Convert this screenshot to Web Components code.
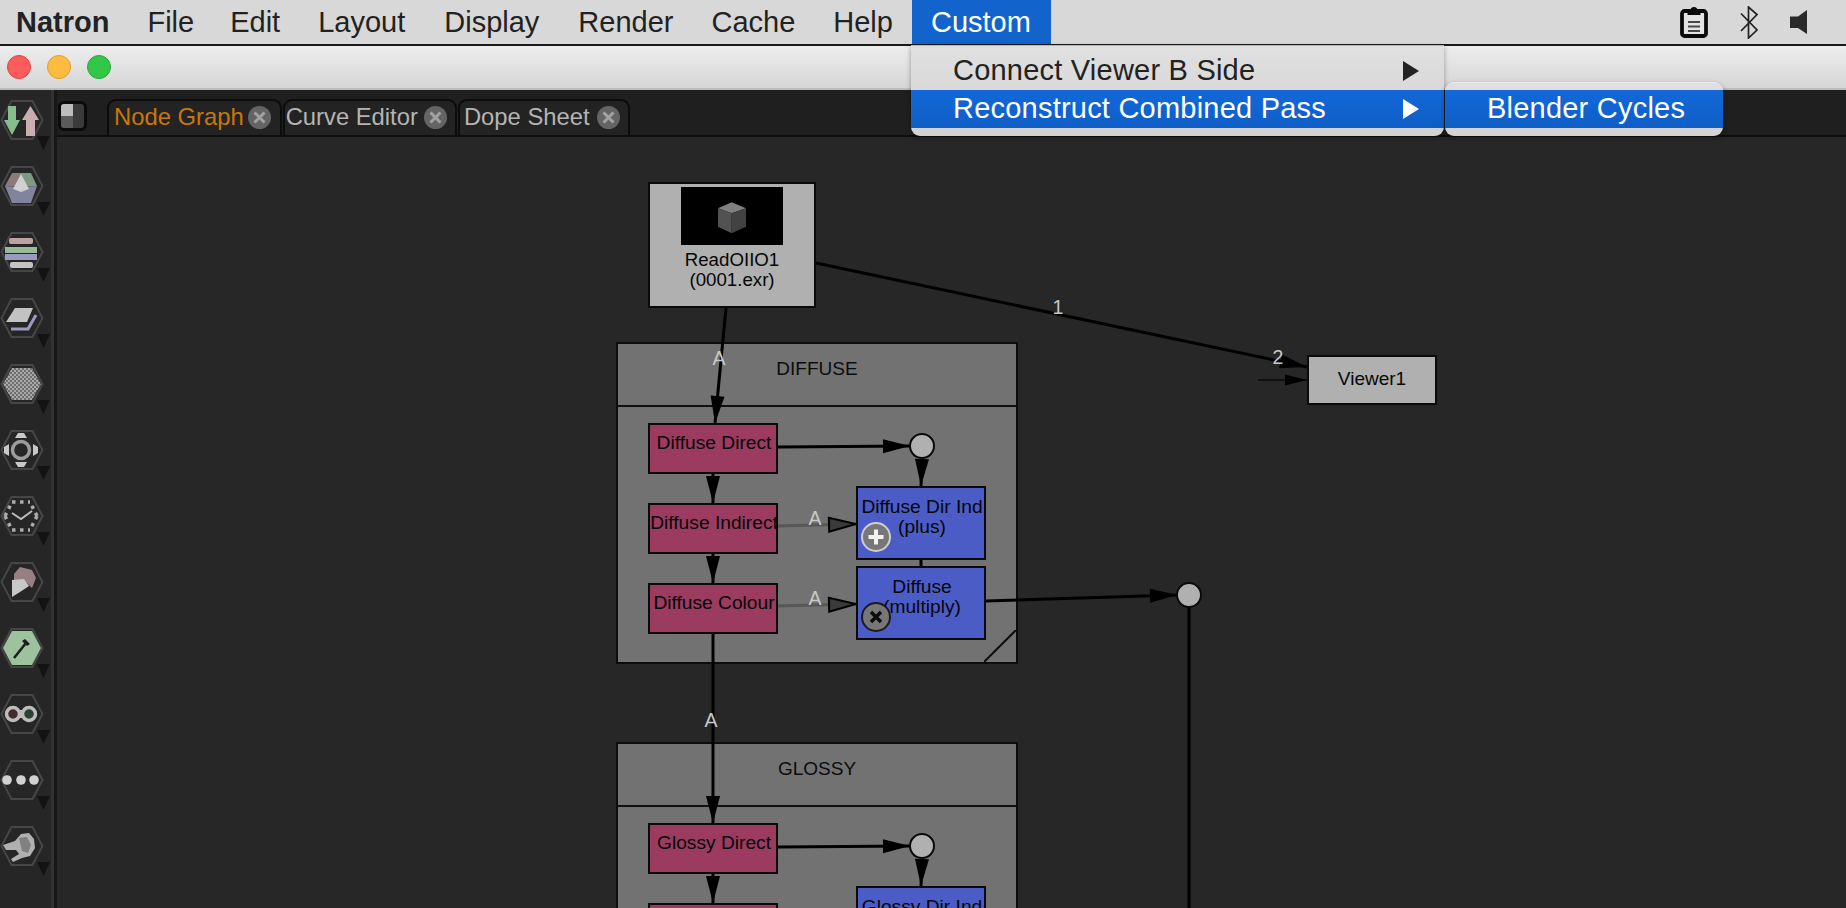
<!DOCTYPE html>
<html>
<head>
<meta charset="utf-8">
<title>Natron</title>
<style>
  html, body { margin: 0; height: 100%; overflow: hidden; background: #262626; }
  body { font-family: "Liberation Sans", Arial, sans-serif; }
</style>
</head>
<body>
<nt-app>
  <nt-menubar slot="menubar">
    <nt-menu-title bold>Natron</nt-menu-title>
    <nt-menu-title style="margin-right:-2px">File</nt-menu-title>
    <nt-menu-title>Edit</nt-menu-title>
    <nt-menu-title style="margin-right:1px">Layout</nt-menu-title>
    <nt-menu-title style="margin-right:1px">Display</nt-menu-title>
    <nt-menu-title>Render</nt-menu-title>
    <nt-menu-title>Cache</nt-menu-title>
    <nt-menu-title>Help</nt-menu-title>
    <nt-menu-title active>Custom</nt-menu-title>
  </nt-menubar>
  <nt-titlebar slot="titlebar"></nt-titlebar>
  <nt-toolbar slot="toolbar">
    <nt-tool icon="io"></nt-tool>
    <nt-tool icon="color"></nt-tool>
    <nt-tool icon="channel"></nt-tool>
    <nt-tool icon="filter"></nt-tool>
    <nt-tool icon="grid"></nt-tool>
    <nt-tool icon="transform"></nt-tool>
    <nt-tool icon="time"></nt-tool>
    <nt-tool icon="paint"></nt-tool>
    <nt-tool icon="keyer"></nt-tool>
    <nt-tool icon="merge"></nt-tool>
    <nt-tool icon="other"></nt-tool>
    <nt-tool icon="tool"></nt-tool>
  </nt-toolbar>
  <nt-tabbar slot="tabs">
    <nt-tab active style="padding-right:9px">Node Graph</nt-tab>
    <nt-tab style="padding:0 8px 2px 1px;gap:6px">Curve Editor</nt-tab>
    <nt-tab style="padding:0 8px 2px 4px;gap:7px">Dope Sheet</nt-tab>
  </nt-tabbar>
  <nt-graph slot="graph">
    <nt-backdrop slot="backdrops" x="616" y="342" w="402" h="322">DIFFUSE</nt-backdrop>
    <nt-backdrop slot="backdrops" x="616" y="742" w="402" h="322">GLOSSY</nt-backdrop>

    <nt-node kind="read" x="648" y="182" w="168" h="126"><nt-thumb></nt-thumb>ReadOIIO1<br>(0001.exr)</nt-node>
    <nt-node kind="viewer" x="1307" y="355" w="130" h="50">Viewer1</nt-node>

    <nt-node kind="pink" x="648" y="423" w="130" h="51">Diffuse Direct</nt-node>
    <nt-node kind="pink" x="648" y="503" w="130" h="51">Diffuse Indirect</nt-node>
    <nt-node kind="pink" x="648" y="583" w="130" h="51">Diffuse Colour</nt-node>
    <nt-node kind="blue" op="plus" x="856" y="486" w="130" h="74">Diffuse Dir Ind<br>(plus)</nt-node>
    <nt-node kind="blue" op="multiply" x="856" y="566" w="130" h="74">Diffuse<br>(multiply)</nt-node>
    <nt-dot x="922" y="446"></nt-dot>
    <nt-dot x="1189" y="595"></nt-dot>

    <nt-node kind="pink" x="648" y="823" w="130" h="51">Glossy Direct</nt-node>
    <nt-node kind="pink" x="648" y="903" w="130" h="51"></nt-node>
    <nt-node kind="blue" x="856" y="886" w="130" h="74">Glossy Dir Ind</nt-node>
    <nt-dot x="922" y="846"></nt-dot>
  </nt-graph>
  <nt-popup slot="popups" style="left:911px;top:45px;width:533px" top>
    <nt-popup-item arrow>Connect Viewer B Side</nt-popup-item>
    <nt-popup-item arrow active>Reconstruct Combined Pass</nt-popup-item>
  </nt-popup>
  <nt-popup slot="popups" style="left:1445px;top:82px;width:278px">
    <nt-popup-item active>Blender Cycles</nt-popup-item>
  </nt-popup>
</nt-app>

<script>
// origin of the node graph canvas in the page, the graph items are given in page coords
const GRAPH_X = 57, GRAPH_Y = 137;

function shadow(el, html) {
  el.attachShadow({mode: "open"}).innerHTML = html;
}

customElements.define('nt-app', class extends HTMLElement {
  constructor() {
    super();
    shadow(this, `
      <style>
        :host { display: flex; flex-direction: column; position: relative; width: 1846px; height: 908px; overflow: hidden; }
        .main { display: flex; flex: 1; min-height: 0; }
        .panel { display: flex; flex-direction: column; flex: 1; min-width: 0; }
      </style>
      <slot name="menubar"></slot>
      <slot name="titlebar"></slot>
      <div class="main">
        <slot name="toolbar"></slot>
        <div class="panel">
          <slot name="tabs"></slot>
          <slot name="graph"></slot>
        </div>
      </div>
      <slot name="popups"></slot>
    `);
  }
});

customElements.define('nt-menubar', class extends HTMLElement {
  constructor() {
    super();
    shadow(this, `
      <style>
        :host { display: flex; align-items: stretch; height: 44px; background: #d8d8d8; border-bottom: 2px solid #1a1a1a; padding-left: 0; }
        .status { display: flex; align-items: center; gap: 32px; margin-left: auto; padding-right: 39px; }
        svg { display: block; }
      </style>
      <slot></slot>
      <div class="status">
        <svg width="28" height="32" viewBox="0 0 28 32">
          <rect x="2" y="5" width="24" height="25" rx="2.500" fill="#e4e4e4" stroke="#0a0a0a" stroke-width="3.800"/>
          <path d="M7.500 9V4.500h3a3.500 3.500 0 0 1 7 0h3V9z" fill="#0a0a0a"/>
          <path d="M8 16h12M8 20.500h12M8 25h12" stroke="#222" stroke-width="2" opacity=".8"/>
        </svg>
        <svg width="18" height="33" viewBox="0 0 18 33">
          <path d="M1 7.500 17 24 8.500 32V1L17 8.500 1 25" fill="none" stroke="#222" stroke-width="1.700"/>
        </svg>
        <svg width="17" height="24" viewBox="0 0 17 24">
          <path d="M0 6.500h8L17 0v24l-9-6H0z" fill="#2a2a2a"/>
        </svg>
      </div>
    `);
  }
});

customElements.define('nt-menu-title', class extends HTMLElement {
  constructor() {
    super();
    shadow(this, `
      <style>
        :host { display: flex; align-items: center; padding: 0 19px; font-size: 29px; color: #222; white-space: nowrap; }
        :host(:first-child) { padding-left: 16px; }
        :host([bold]) { font-weight: bold; }
        :host([active]) { background: #1263cb; color: #fff; padding-right: 20px; }
      </style>
      <slot></slot>
    `);
  }
});

customElements.define('nt-titlebar', class extends HTMLElement {
  constructor() {
    super();
    shadow(this, `
      <style>
        :host { display: flex; align-items: center; gap: 16px; height: 44px; box-sizing: border-box; padding-left: 7px; background: linear-gradient(#ededed, #d6d6d6); border-bottom: 2px solid #bcbcbc; }
        i { width: 24px; height: 24px; box-sizing: border-box; border-radius: 50%; border: 1px solid; }
        .r { background: #fc5c5b; border-color: #e2453f; }
        .y { background: #fdbc40; border-color: #de9e2a; }
        .g { background: #33c748; border-color: #25a836; }
      </style>
      <i class="r"></i><i class="y"></i><i class="g"></i>
    `);
  }
});

customElements.define('nt-toolbar', class extends HTMLElement {
  constructor() {
    super();
    shadow(this, `
      <style>
        :host { display: flex; flex-direction: column; flex: none; width: 51px; padding-top: 10px; box-sizing: content-box; height: 808px; background: #262626; border-right: 3px solid #323232; box-shadow: 3px 0 0 #171717; margin-right: 3px; }
      </style>
      <slot></slot>
    `);
  }
});

const HEX = '<path d="M1.500 20 11.500 1H32.500L42.500 20 32.500 39H11.500z" fill="none" stroke="#464646" stroke-width="2"/>';
const TOOL_ICONS = {
  io: `<path d="M8 6h8v14h4L12 35 4 20h4z" fill="#85bd8c"/><path d="M30.500 6 39 20h-4v16h-9V20h-4z" fill="#c9adb0"/>`,
  color: `<path d="M5 20 12 7h9v14z" fill="#8c7a78"/><path d="M21 7h10l6 13-16 1z" fill="#7d9a80"/><path d="M5 20l16 1 16-1-6 17H12z" fill="#81839f"/><path d="M21 8l8 15-8 3-8-3z" fill="#d0d0d0"/>`,
  channel: `<rect x="9" y="6" width="24" height="6" rx="2" fill="#bda2a2"/><rect x="5" y="15" width="32" height="6" fill="#98bb95"/><rect x="5" y="22" width="32" height="6" fill="#9a9ac0"/><rect x="10" y="30" width="23" height="6" rx="2" fill="#c4c4c4"/>`,
  filter: `<path d="M6 24l9-14h18l-6 14z" fill="#c2c2c2"/><path d="M11 31h17l8-14" fill="none" stroke="#9a9ac4" stroke-width="3"/>`,
  grid: `<defs><pattern id="chk" width="4" height="4" patternUnits="userSpaceOnUse"><rect width="4" height="4" fill="#6e6e6e"/><rect width="2" height="2" fill="#a8a8a8"/><rect x="2" y="2" width="2" height="2" fill="#a8a8a8"/></pattern></defs><path d="M3 20 12 4h20l9 16-9 16H12z" fill="url(#chk)"/>`,
  transform: `<circle cx="21" cy="20" r="8.500" fill="none" stroke="#9c9c9c" stroke-width="3.500"/><path d="M15 8l3-5h6l3 5zM15 32l3 5h6l3-5zM9 14l-5 3v6l5 3zM33 14l5 3v6l-5 3z" fill="#c8c8c8"/>`,
  time: `<g fill="none" stroke="#ababab" stroke-width="3.500" stroke-dasharray="3.500 4.500"><path d="M12 6h18M12 34h18M5 20l6-12M37 20l-6-12M5 20l6 12M37 20l-6 12"/></g><path d="M12 17l9 6 11-8" fill="none" stroke="#bcbcbc" stroke-width="2"/>`,
  paint: `<path d="M14 12l6-7 12 3 4 8-4 10-6-6-12-2z" fill="#987f81"/><path d="M12 18l12-1 5 7-9 6-8 5z" fill="#c8c8c8"/>`,
  keyer: `<path d="M3 20 12 3h20l9 17-9 17H12z" fill="#9dc29d"/><path d="M14 30 26 15" stroke="#1c1c1c" stroke-width="2.500"/><path d="M25 11l5 5-3 2-5-5z" fill="#1c1c1c"/>`,
  merge: `<rect x="16" y="16" width="10" height="8" fill="#bdbdbd"/><circle cx="13" cy="20" r="6.500" fill="#3f2e2e" stroke="#bdbdbd" stroke-width="3.500"/><circle cx="29" cy="20" r="6.500" fill="#2a4230" stroke="#bdbdbd" stroke-width="3.500"/>`,
  other: `<circle cx="7" cy="20" r="4.800" fill="#d2d2d2"/><circle cx="21" cy="20" r="4.800" fill="#d2d2d2"/><circle cx="34" cy="20" r="4.800" fill="#d2d2d2"/>`,
  tool: `<path d="M3 19l12-4 6-7 8-1 5 6 1 9-5 8-8 2-9 4-2-3 8-5-3-4-10 0z" fill="#b0b0b0"/><path d="M19 12l8-1 4 8-3 8-6-2z" fill="#808080"/>`
};

customElements.define('nt-tool', class extends HTMLElement {
  connectedCallback() {
    if (this.shadowRoot) return;
    shadow(this, `
      <style>
        :host { display: block; height: 66px; flex: none; }
        svg { display: block; }
        .icon { filter: blur(.6px); }
      </style>
      <svg width="52" height="66" viewBox="0 0 52 66">
        <g class="icon">${HEX}${TOOL_ICONS[this.getAttribute('icon')]}</g>
        <path d="M37 36h13l-6.500 14z" fill="#131313"/>
      </svg>
    `);
  }
});

customElements.define('nt-tabbar', class extends HTMLElement {
  constructor() {
    super();
    shadow(this, `
      <style>
        :host { display: flex; align-items: flex-end; flex: none; height: 47px; box-sizing: border-box; background: #1f1f1f; border-bottom: 2px solid #0e0e0e; padding-left: 1px; }
        .corner { display: grid; grid-template-columns: 1fr 1fr; grid-template-rows: 1fr 1fr; width: 29px; height: 30px; box-sizing: border-box; border: 3px solid #0a0a0a; border-radius: 6px; overflow: hidden; margin: 0 20px 4px 0; background: #3a3a3a; }
        .corner i:nth-child(1) { background: #bcbcbc; }
        .corner i:nth-child(3) { background: #5a5a5a; }
        .tabs { display: flex; gap: 0; }
      </style>
      <div class="corner"><i></i><i></i><i></i><i></i></div>
      <div class="tabs"><slot></slot></div>
    `);
  }
});

customElements.define('nt-tab', class extends HTMLElement {
  constructor() {
    super();
    shadow(this, `
      <style>
        :host { display: flex; align-items: center; gap: 4px; height: 36px; box-sizing: border-box; padding: 0 10px 2px 5px; margin-right: 1px; border: 2px solid #0c0c0c; border-bottom: 0; border-radius: 9px 9px 0 0; background: #232323; color: #b4b4b4; font-size: 23.800px; white-space: nowrap; }
        :host([active]) { color: #c9770a; }
        svg { display: block; flex: none; }
      </style>
      <slot></slot>
      <svg width="23" height="23" viewBox="0 0 23 23">
        <circle cx="11.500" cy="11.500" r="11.500" fill="#646464"/>
        <path d="M6.500 6.500l10 10M16.500 6.500l-10 10" stroke="#a2a2a2" stroke-width="3"/>
      </svg>
    `);
  }
});

// edges of the graph, in page coords. head: false for the lines without arrow
const EDGES = [
  {a: [816, 263], b: [1307, 367]},
  {a: [726, 308], b: [715, 423]},
  {a: [778, 447], b: [910, 446]},
  {a: [922, 458], b: [921, 486]},
  {a: [713, 474], b: [713, 503]},
  {a: [713, 554], b: [713, 583]},
  {a: [778, 526], b: [856, 524], dim: true},
  {a: [778, 606], b: [856, 604], dim: true},
  {a: [921, 560], b: [921, 566], head: false},
  {a: [986, 601], b: [1177, 595]},
  {a: [713, 634], b: [713, 823]},
  {a: [1189, 607], b: [1189, 920], head: false},
  {a: [1258, 380], b: [1307, 380], thin: true},
  {a: [778, 847], b: [910, 846]},
  {a: [922, 858], b: [921, 886]},
  {a: [713, 874], b: [713, 903]}
];
const EDGE_LABELS = [
  ['1', 1058, 314], ['2', 1278, 364],
  ['A', 719, 365], ['A', 815, 525], ['A', 815, 605], ['A', 711, 727]
];

function edgeSvg(e) {
  const [ax, ay] = e.a, [bx, by] = e.b;
  const len = Math.hypot(bx - ax, by - ay), ux = (bx - ax) / len, uy = (by - ay) / len;
  const stroke = e.dim ? '#565656' : e.thin ? '#121212' : '#000';
  const line = `<line x1="${ax}" y1="${ay}" x2="${bx}" y2="${by}" stroke="${stroke}" stroke-width="${e.thin ? 2 : 3}"/>`;
  if (e.head === false) return line;
  const l = e.thin ? 22 : 27, w = e.thin ? 5.500 : 7;
  const hx = bx - ux * l, hy = by - uy * l;
  const pts = [[bx, by], [hx - uy * w, hy + ux * w], [hx + uy * w, hy - ux * w]].map(p => p.join(',')).join(' ');
  const fill = e.dim ? '#3a3a3a' : '#000';
  return line + `<polygon points="${pts}" fill="${fill}" stroke="#000" stroke-width="${e.dim ? 2 : 0}"/>`;
}

customElements.define('nt-graph', class extends HTMLElement {
  constructor() {
    super();
    const labels = EDGE_LABELS.map(l => `<text x="${l[1]}" y="${l[2]}">${l[0]}</text>`).join('');
    shadow(this, `
      <style>
        :host { display: block; position: relative; flex: 1; min-height: 0; overflow: hidden; background: #272727; }
        svg { position: absolute; left: 0; top: 0; display: block; }
        text { font: 19.500px "Liberation Sans", Arial, sans-serif; fill: #c8c8c8; text-anchor: middle; }
      </style>
      <slot name="backdrops"></slot>
      <svg width="1789" height="771" viewBox="${GRAPH_X} ${GRAPH_Y} 1789 771">${EDGES.map(edgeSvg).join('')}${labels}</svg>
      <slot></slot>
    `);
  }
});

// places a graph item on the canvas from its x, y, w, h attributes
class GraphItem extends HTMLElement {
  place() {
    const s = this.style;
    s.left = (this.getAttribute('x') - GRAPH_X) + 'px';
    s.top = (this.getAttribute('y') - GRAPH_Y) + 'px';
    if (this.hasAttribute('w')) s.width = this.getAttribute('w') + 'px';
    if (this.hasAttribute('h')) s.height = this.getAttribute('h') + 'px';
  }
}

customElements.define('nt-backdrop', class extends GraphItem {
  connectedCallback() {
    if (this.shadowRoot) return;
    this.place();
    shadow(this, `
      <style>
        :host { display: block; position: absolute; box-sizing: border-box; border: 2px solid #0c0c0c; background: #727272; color: #0c0c0c; font-size: 19px; }
        .head { display: flex; align-items: center; justify-content: center; height: 49px; padding-bottom: 12px; border-bottom: 2px solid #111; box-sizing: content-box; }
        svg { position: absolute; right: 0; bottom: 0; }
      </style>
      <div class="head"><slot></slot></div>
      <svg width="32" height="32" viewBox="0 0 32 32"><path d="M0 32 32 0" stroke="#0c0c0c" stroke-width="2"/></svg>
    `);
  }
});

const OP_BADGES = {
  plus: `<circle cx="16" cy="16" r="14" fill="#777" stroke="#cfcfcf" stroke-width="2"/><path d="M16 8.500v15M8.500 16h15" stroke="#f2f2f2" stroke-width="4"/>`,
  multiply: `<circle cx="16" cy="16" r="14" fill="#777" stroke="#1c1c1c" stroke-width="2"/><path d="M11 11l10 10M21 11l-10 10" stroke="#0c0c0c" stroke-width="3.500"/>`
};

customElements.define('nt-node', class extends GraphItem {
  connectedCallback() {
    if (this.shadowRoot) return;
    this.place();
    const op = this.getAttribute('op');
    shadow(this, `
      <style>
        :host { display: block; position: absolute; box-sizing: border-box; border: 2px solid #0a0a0a; color: #060606; font-size: 19.200px; line-height: 20px; text-align: center; white-space: nowrap; padding: 8px 0 0 2px; }
        :host([kind=read]) { background: #b0b0b0; border-width: 2px; padding: 3px 0 0; font-size: 18.700px; }
        :host([kind=viewer]) { background: #b0b0b0; padding: 12px 0 0; font-size: 19px; }
        :host([kind=pink]) { background: #9b3b60; }
        :host([kind=blue]) { background: #4b5cc7; padding-top: 9px; }
        .wrap { display: flex; justify-content: center; }
        .wrap div { flex: none; }
        svg { position: absolute; left: 2px; top: 33px; }
      </style>
      <div class="wrap"><div><slot></slot></div></div>
      ${op ? `<svg width="32" height="32" viewBox="0 0 32 32">${OP_BADGES[op]}</svg>` : ''}
    `);
  }
});

customElements.define('nt-thumb', class extends HTMLElement {
  constructor() {
    super();
    shadow(this, `
      <style>
        :host { display: block; width: 102px; height: 58px; margin: 0 auto 5px; background: #000; }
        svg { display: block; }
      </style>
      <svg width="102" height="58" viewBox="0 0 102 58">
        <path d="M50.700 15.300 65 21.300 50.700 26.300 37 21.300z" fill="#808080"/>
        <path d="M37 21.300 50.700 26.300V46.300L37 39.700z" fill="#525252"/>
        <path d="M65 21.300 50.700 26.300V46.300L65 39.700z" fill="#424242"/>
      </svg>
    `);
  }
});

customElements.define('nt-dot', class extends GraphItem {
  connectedCallback() {
    if (this.shadowRoot) return;
    this.place();
    shadow(this, `
      <style>
        :host { display: block; position: absolute; width: 26px; height: 26px; margin: -13px 0 0 -13px; box-sizing: border-box; border: 2px solid #0a0a0a; border-radius: 50%; background: #b0b0b0; }
      </style>
    `);
  }
});

customElements.define('nt-popup', class extends HTMLElement {
  constructor() {
    super();
    shadow(this, `
      <style>
        :host { display: block; position: absolute; box-sizing: border-box; padding: 7px 0 8px; background: linear-gradient(#e0e0e0, #d2d2d2); border-radius: 9px; box-shadow: 0 2px 5px rgba(0,0,0,.35); border-top: 1px solid #ececec; }
        :host([top]) { border-radius: 0 0 9px 9px; border-top: 1px solid #b4b4b4; padding-top: 6px; }
      </style>
      <slot></slot>
    `);
  }
});

customElements.define('nt-popup-item', class extends HTMLElement {
  constructor() {
    super();
    shadow(this, `
      <style>
        :host { display: flex; align-items: center; justify-content: space-between; height: 38px; padding: 0 25px 0 42px; font-size: 29px; letter-spacing: .22px; color: #222; white-space: nowrap; }
        :host([active]) { background: linear-gradient(#1268da, #0f5ec6); color: #fff; }
        span { position: relative; margin-top: -2px; }
        svg { display: none; }
        :host([arrow]) svg { display: block; }
        path { fill: #222; }
        :host([active]) path { fill: #fff; }
      </style>
      <span><slot></slot></span>
      <svg width="16" height="20" viewBox="0 0 16 20"><path d="M0 0 16 10 0 20z"/></svg>
    `);
  }
});
</script>
</body>
</html>
